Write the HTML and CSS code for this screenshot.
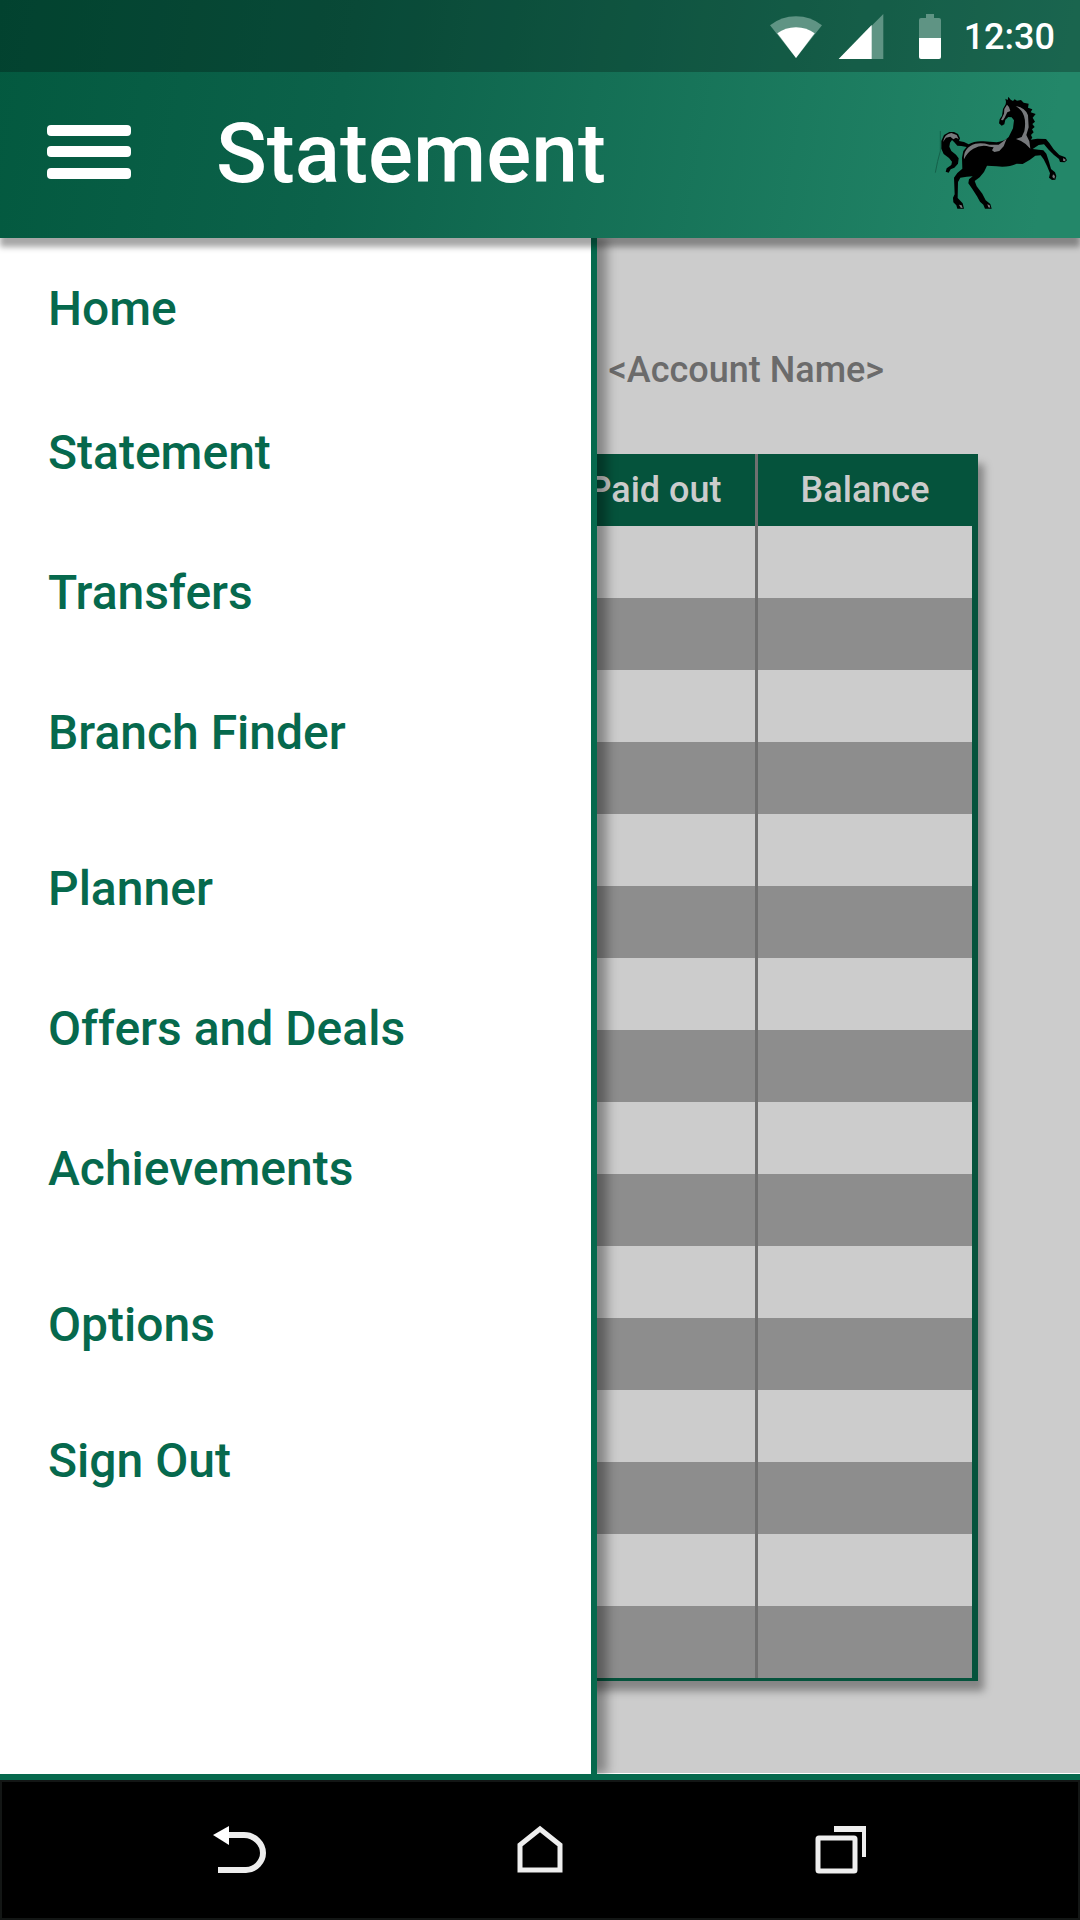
FILE: index.html
```html
<!DOCTYPE html>
<html lang="en">
<head>
<meta charset="utf-8">
<meta name="viewport" content="width=device-width, initial-scale=1">
<title>Statement</title>
<link rel="stylesheet" href="styles.css">
</head>
<body>
<header class="top">
  <div class="status">
    <svg class="wifi" width="52" height="42" viewBox="0 0 156 126" aria-hidden="true">
      <path fill="#5f9484" d="M0 28Q34 1 78 1T156 28L78 126Z"/>
      <path fill="#fff" d="M22 52Q46 34 78 34T134 52L78 126Z"/>
    </svg>
    <svg class="signal" width="46" height="45" viewBox="0 0 138 135" aria-hidden="true">
      <path fill="#5f9484" d="M136 0V135H2Z"/>
      <path fill="#fff" d="M101 33V135H2Z"/>
    </svg>
    <svg class="battery" width="22" height="45" viewBox="0 0 22 45" aria-hidden="true">
      <path fill="#5f9484" d="M7 0H15V4H20Q22 4 22 6V24H0V6Q0 4 2 4H7Z"/>
      <path fill="#fff" d="M0 24H22V43Q22 45 20 45H2Q0 45 0 43Z"/>
    </svg>
    <time class="clock">12:30</time>
  </div>
  <div class="appbar">
    <button class="menu-button" type="button" aria-label="Menu">
      <svg width="84" height="54" viewBox="0 0 84 54" fill="#fff">
        <rect width="84" height="11" rx="4"/>
        <rect y="21" width="84" height="11" rx="4"/>
        <rect y="43" width="84" height="11" rx="4"/>
      </svg>
    </button>
    <h1 class="title">Statement</h1>
    <svg class="logo" width="137" height="117" viewBox="39 39 411 351" role="img" aria-label="Black horse">
      <path fill="none" stroke="#14614a" stroke-width="3" d="M61 150V210Q52 240 46 275"/>
      <path d="M258 62L256 53L263 57L265 47L272 56L279 60L284 55L291 59L303 57L311 65L326 68L324 80L337 85L332 94L347 99L338 110L345 122L337 129L344 138L336 145L341 154L333 162L337 170L332 176L352 173L378 174L388 186L401 205L418 222L436 229L441 238L434 244L420 243L417 234L402 222L386 206L372 190L356 192L338 204L356 206L370 208L379 218L387 242L393 264L405 274L409 285L406 296L396 297L387 290L390 277L381 255L371 235L362 223L346 224L330 236L308 249L290 248Q265 260 230 256L201 254L192 273L179 289L164 300L170 316L187 338L197 358L211 369L215 383H195L190 371L180 362L171 346L157 324L145 307L147 295L158 286L140 287L121 290L114 303L113 351L128 367L132 383H112L109 373L100 364L99 350L104 340L102 290L112 276L127 263L126 230L130 210L140 198L124 195L112 194L103 184L96 177L90 185L88 197L94 210L108 221L116 232L114 248L103 260L92 265L86 275L77 272L80 262L94 252L96 242L87 231L71 219L64 203V180L72 162L88 153H102L114 159L120 172L117 180L132 183L146 190Q164 179 190 181L230 184Q254 181 266 168L279 142L282 118L275 109L265 108L256 116L253 130L245 134L237 127L239 115L246 104L249 84L257 70Z"/>
      <g fill="#77797c">
        <path d="M261 71L267 78L271 90L262 94L254 110L249 118L243 117L252 98L253 84Z"/>
        <path d="M287 75Q316 80 324 103L326 139L319 162L328 181L331 203Q319 188 303 180L288 174L305 168L313 151Q318 124 312 105Q306 86 287 75Z"/>
        <path d="M132 235Q129 200 166 188Q187 184 208 191H236L260 173L251 196L238 210L223 213L216 208L221 199L209 197Q184 190 160 203Q140 215 132 235Z"/>
        <path d="M69 183Q73 159 94 156L110 162L116 174L108 170L100 175L91 167L78 170Z"/>
        <path d="M117 371L125 373L128 381L122 380ZM202 370L209 373L211 380L205 379ZM430 231L437 236L435 241L429 239ZM399 280L405 285L403 293L397 288Z"/>
      </g>
    </svg>
  </div>
</header>

<main class="screen">
  <section class="statement">
    <p class="account">&lt;Account Name&gt;</p>
    <table class="ledger">
      <thead>
        <tr><th class="col-date"></th><th class="col-in"></th><th class="col-out" scope="col">Paid out</th><th class="col-balance" scope="col">Balance</th></tr>
      </thead>
      <tbody>
        <tr><td></td><td></td><td></td><td></td></tr>
        <tr><td></td><td></td><td></td><td></td></tr>
        <tr><td></td><td></td><td></td><td></td></tr>
        <tr><td></td><td></td><td></td><td></td></tr>
        <tr><td></td><td></td><td></td><td></td></tr>
        <tr><td></td><td></td><td></td><td></td></tr>
        <tr><td></td><td></td><td></td><td></td></tr>
        <tr><td></td><td></td><td></td><td></td></tr>
        <tr><td></td><td></td><td></td><td></td></tr>
        <tr><td></td><td></td><td></td><td></td></tr>
        <tr><td></td><td></td><td></td><td></td></tr>
        <tr><td></td><td></td><td></td><td></td></tr>
        <tr><td></td><td></td><td></td><td></td></tr>
        <tr><td></td><td></td><td></td><td></td></tr>
        <tr><td></td><td></td><td></td><td></td></tr>
        <tr><td></td><td></td><td></td><td></td></tr>
      </tbody>
    </table>
  </section>

  <nav class="drawer" aria-label="Main menu">
    <ul class="menu">
      <li class="menu-first"><a href="#home">Home</a></li>
      <li><a href="#statement">Statement</a></li>
      <li><a href="#transfers">Transfers</a></li>
      <li class="menu-section-end"><a href="#branch-finder">Branch Finder</a></li>
      <li><a href="#planner">Planner</a></li>
      <li><a href="#offers">Offers and Deals</a></li>
      <li class="menu-section-end"><a href="#achievements">Achievements</a></li>
      <li class="menu-tight"><a href="#options">Options</a></li>
      <li><a href="#sign-out">Sign Out</a></li>
    </ul>
  </nav>
</main>

<footer class="system">
  <button class="system-button" type="button" aria-label="Back">
    <svg width="60" height="52" viewBox="0 0 60 52" fill="none" stroke="#eee" stroke-width="6">
      <path d="M16 11H34C45 11 53 20 53 29C53 37 46 46 36 46H8"/>
      <path fill="#fff" stroke="none" d="M3 11L19 2V21Z"/>
    </svg>
  </button>
  <button class="system-button" type="button" aria-label="Home">
    <svg width="60" height="52" viewBox="0 0 60 52" fill="none" stroke="#eee" stroke-width="5">
      <path d="M10 46V21L30 5L50 21V46Z"/>
    </svg>
  </button>
  <button class="system-button" type="button" aria-label="Recent apps">
    <svg width="60" height="52" viewBox="0 0 60 52" fill="none" stroke="#eee">
      <rect x="8" y="14" width="37" height="33" rx="1" stroke-width="5"/>
      <path stroke-width="6" d="M24 5H56"/>
      <path stroke-width="4" d="M54 2V33"/>
    </svg>
  </button>
</footer>
</body>
</html>
```
FILE: styles.css
```css
* {
  box-sizing: border-box;
}

body {
  margin: 0;
  min-height: 100vh;
  display: flex;
  flex-direction: column;
  background: #fff;
  font-family: Roboto, "Liberation Sans", sans-serif;
  font-weight: 500;
}

button {
  display: flex;
  padding: 0;
  border: 0;
  background: none;
}

/* Status bar and app bar */
.top {
  position: relative;
  z-index: 2;
  background: linear-gradient(100deg, #03593f 0%, #0c624a 32%, #238769 96%);
  box-shadow: 0 9px 6px rgba(0, 0, 0, 0.35);
}

.status {
  display: flex;
  align-items: center;
  justify-content: flex-end;
  height: 72px;
  padding: 1px 25px 0 0;
  background: rgba(0, 0, 0, 0.25);
}

.signal {
  margin-left: 16px;
}

.battery {
  margin-left: 35px;
}

.clock {
  margin-left: 23px;
  color: #fff;
  font-size: 36px;
  line-height: 48px;
}

.appbar {
  display: flex;
  align-items: center;
  height: 166px;
  padding: 0 10px 6px 47px;
}

.title {
  flex: 1;
  margin: 0 0 0 85px;
  padding-top: 4px;
  color: #fff;
  font-size: 84px;
  font-weight: 500;
  line-height: 96px;
}

/* Statement behind the drawer */
.screen {
  position: relative;
  flex: 1;
  border-bottom: 6px solid #06694d;
}

.statement {
  height: 100%;
  padding: 108px 102px 92px;
  background: #ccc;
}

.account {
  margin: 0 94px 60px 0;
  color: #6b6b6b;
  font-size: 36px;
  line-height: 48px;
  text-align: right;
}

.ledger {
  width: 100%;
  table-layout: fixed;
  border: solid #05533c;
  border-width: 0 6px 3px;
  border-spacing: 0;
  box-shadow: 6px 10px 8px rgba(0, 0, 0, 0.35);
}

.ledger th,
.ledger td {
  height: 72px;
  padding: 0;
  border-right: 3px solid #707070;
}

.ledger th {
  background: #05533c;
  color: #ccc;
  font-size: 36px;
  font-weight: 500;
  line-height: 48px;
}

.ledger td {
  background: #ccc;
}

.ledger tr:nth-child(even) td {
  background: #8d8d8d;
}

.ledger th:last-child,
.ledger td:last-child {
  border-right: 0;
}

.col-out {
  width: 203px;
}

.col-balance {
  width: 214px;
}

/* Navigation drawer */
.drawer {
  position: absolute;
  inset: 0 auto 0 0;
  width: 597px;
  max-width: 80%;
  padding: 43px 0 0 48px;
  border-right: 6px solid #06694d;
  background: #fff;
  box-shadow: 10px 0 10px rgba(0, 0, 0, 0.35);
  clip-path: inset(0 -30px 0 0);
}

.menu {
  margin: 0;
  padding: 0;
  list-style: none;
}

.menu li {
  margin-bottom: 84px;
  font-size: 48px;
  line-height: 56px;
}

.menu .menu-first {
  margin-bottom: 88px;
}

.menu .menu-section-end {
  margin-bottom: 100px;
}

.menu .menu-tight {
  margin-bottom: 80px;
}

.menu a {
  color: #06694d;
  text-decoration: none;
}

/* System navigation */
.system {
  display: flex;
  align-items: center;
  justify-content: center;
  gap: 240px;
  height: 140px;
  border: 2px solid #131615;
  background: #000;
}
```
